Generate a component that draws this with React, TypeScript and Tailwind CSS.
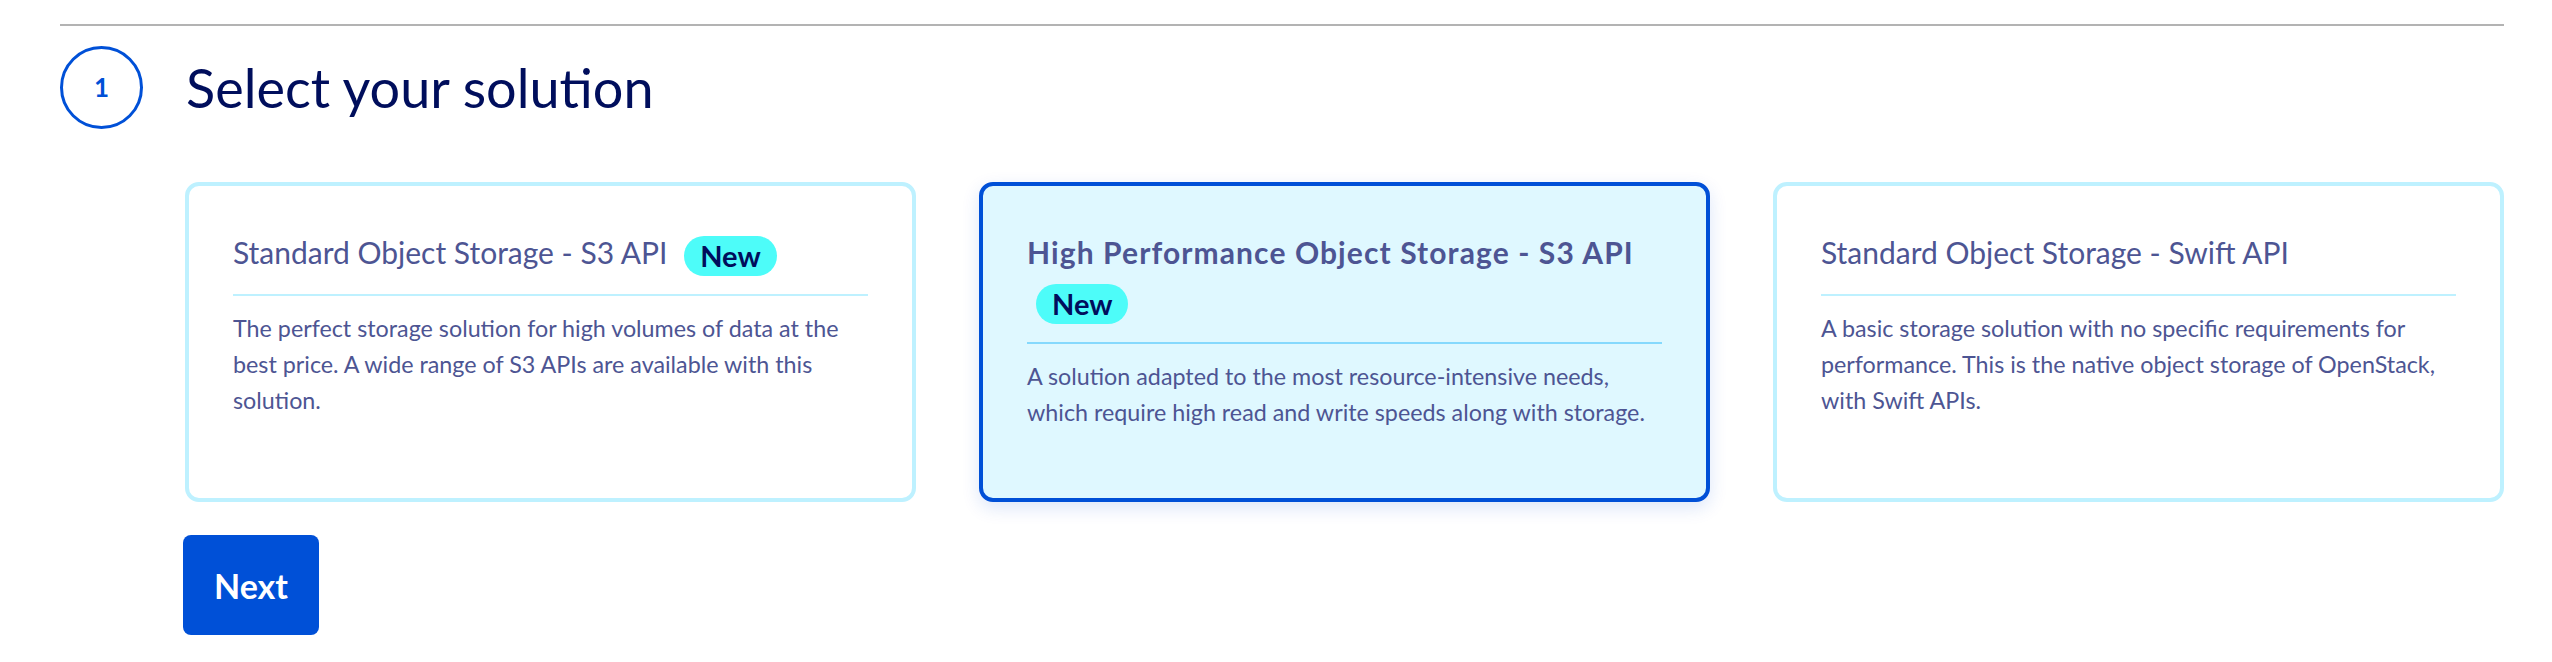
import React from "react";

type Card = {
  title: string;
  badge?: boolean;
  desc: string;
  selected?: boolean;
};

const cards: Card[] = [
  {
    title: "Standard Object Storage - S3 API",
    badge: true,
    desc: "The perfect storage solution for high volumes of data at the best price. A wide range of S3 APIs are available with this solution.",
  },
  {
    title: "High Performance Object Storage - S3 API",
    badge: true,
    desc: "A solution adapted to the most resource-intensive needs, which require high read and write speeds along with storage.",
    selected: true,
  },
  {
    title: "Standard Object Storage - Swift API",
    desc: "A basic storage solution with no specific requirements for performance. This is the native object storage of OpenStack, with Swift APIs.",
  },
];

function SolutionCard({ card }: { card: Card }) {
  return (
    <div
      className={
        card.selected
          ? "h-[320px] rounded-[14px] border-4 border-[#0050d7] bg-[#dff8ff] px-[44px] pt-[42px] shadow-[0_6px_18px_rgba(0,80,215,0.14)]"
          : "h-[320px] rounded-[14px] border-4 border-[#bef1ff] bg-white px-[44px] pt-[42px]"
      }
    >
      <div
        className={
          card.selected
            ? "text-[30px] leading-[48px] font-bold tracking-[1.1px] text-[#4d5593]"
            : "text-[30px] leading-[48px] font-normal text-[#4d5593]"
        }
      >
        {card.title}{" "}
        {card.badge && (
          <span className="ml-[9px] inline-flex h-[40px] items-center rounded-full bg-[#4dfcf9] px-[16px] align-middle text-[29px] font-bold tracking-normal text-[#000e5c]">
            New
          </span>
        )}
      </div>
      <div
        className={
          card.selected
            ? "mt-[18px] h-[2px] bg-[#85d9fd]"
            : "mt-[18px] h-[2px] bg-[#bef1ff]"
        }
      />
      <p className="mt-[14px] text-[23.3px] leading-[36px] text-[#4d5593]">
        {card.desc}
      </p>
    </div>
  );
}

export default function App() {
  return (
    <div
      className="min-h-[662px] w-full bg-white pl-[60px] pr-[48px] pt-[24px]"
      style={{ fontFamily: "Lato, 'Noto Sans', sans-serif" }}
    >
      <div className="h-[2px] w-full bg-[#b3b3b3]" />
      <div className="mt-[20px] flex items-center gap-[43px]">
        <div className="flex h-[83px] w-[83px] shrink-0 items-center justify-center rounded-full border-[3px] border-[#0050d7] text-[26px] font-bold text-[#0050d7]">
          1
        </div>
        <h1 className="text-[54px] font-normal leading-none text-[#000e5c]">
          Select your solution
        </h1>
      </div>
      <div className="ml-[125px] mt-[53px] grid grid-cols-3 gap-[63px]">
        {cards.map((c) => (
          <SolutionCard key={c.title} card={c} />
        ))}
      </div>
      <button className="ml-[123px] mt-[33px] flex h-[100px] w-[136px] items-center justify-center rounded-[8px] bg-[#0050d7] text-[34px] font-bold text-white">
        Next
      </button>
    </div>
  );
}
